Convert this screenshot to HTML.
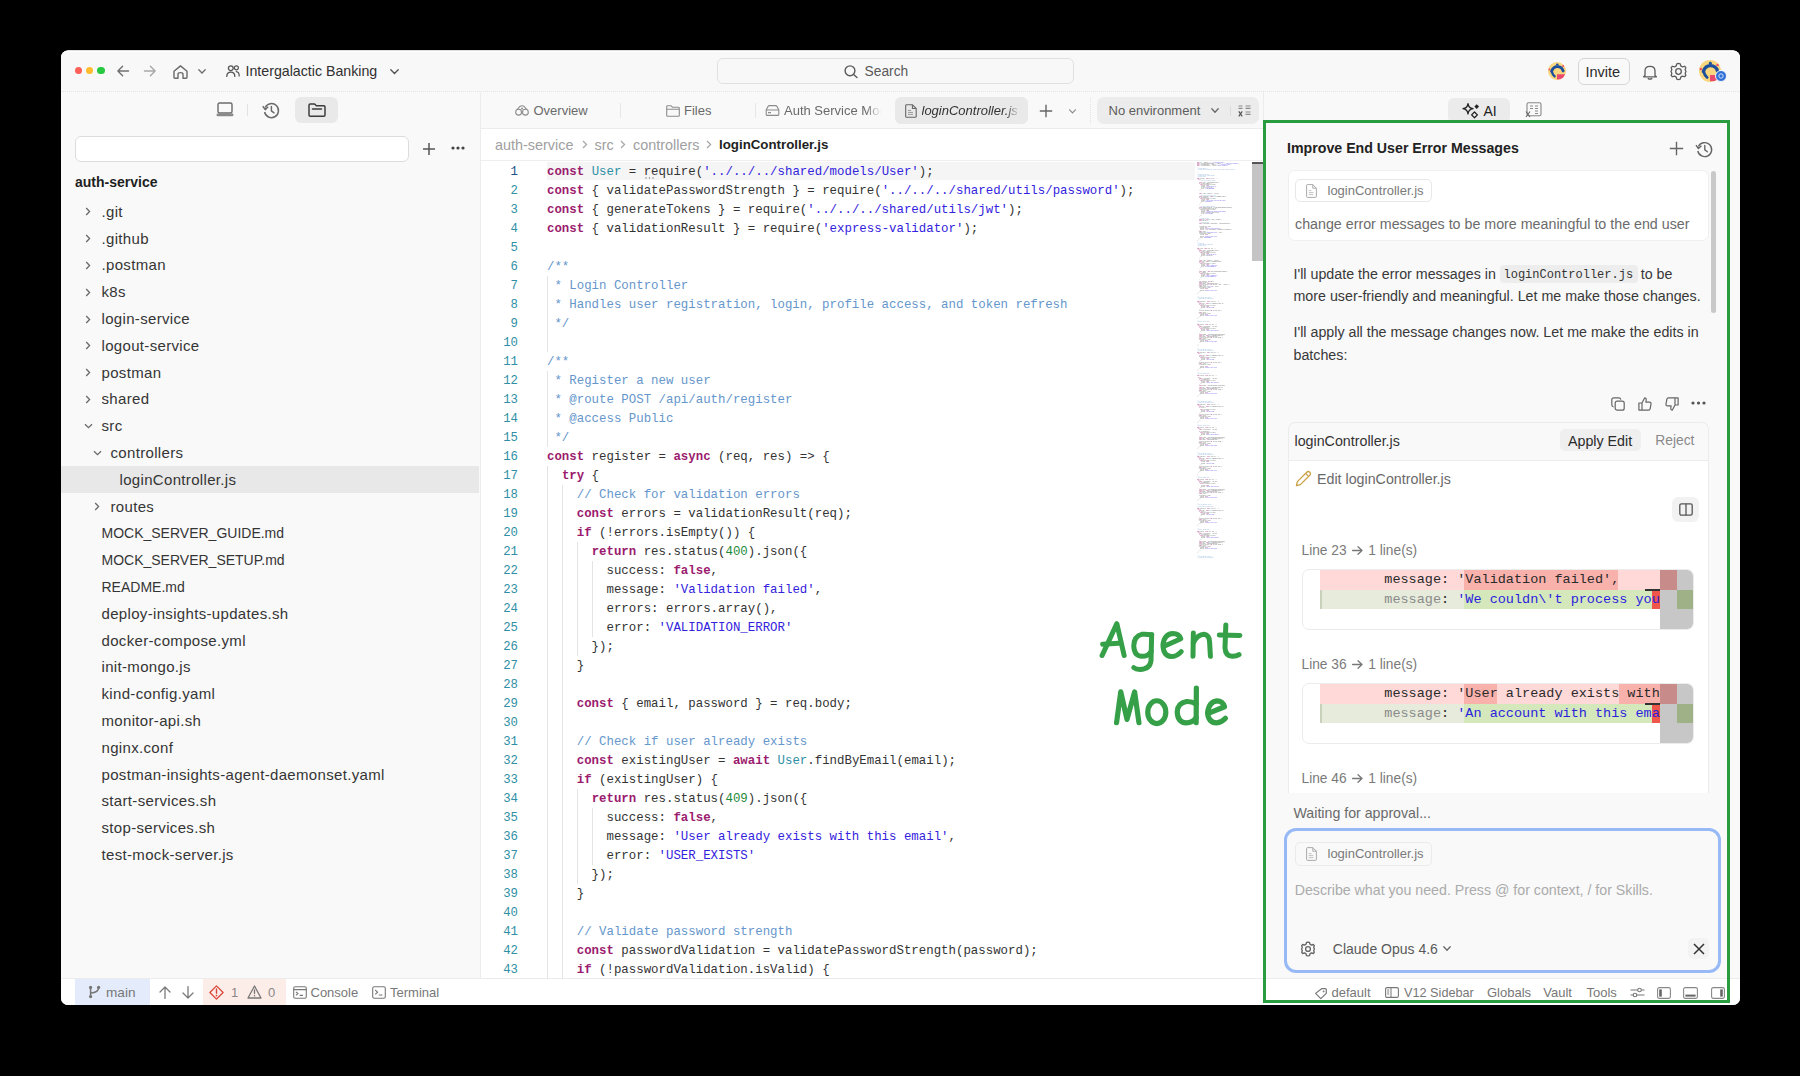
<!DOCTYPE html>
<html><head><meta charset="utf-8">
<style>
*{box-sizing:border-box;margin:0;padding:0}
html,body{width:1800px;height:1076px;background:#000;overflow:hidden}
body{font-family:"Liberation Sans",sans-serif;color:#212121;position:relative}
.app{position:absolute;left:0;top:0;width:1800px;height:1076px;background:#f9f9f9;clip-path:inset(50.5px 60px 71px 61px round 7px)}
.a{position:absolute;white-space:pre}
.hl{position:absolute;background:#e9e9e9}
.code{position:absolute;left:547px;top:162.5px;font-family:"Liberation Mono",monospace;font-size:12.4px;line-height:19px;color:#333;white-space:pre}
.ln{position:absolute;left:480px;width:38px;top:162.5px;font-family:"Liberation Mono",monospace;font-size:12.3px;line-height:19px;color:#2f8fa5;text-align:right;white-space:pre}
.k{color:#9b1b6e;font-weight:bold}
.s{color:#3322dd}
.c{color:#6596cc}
.n{color:#1f8a3b}
.t{color:#2d8ea6}
svg{position:absolute;overflow:visible}
.tab{top:100.5px;font-size:13px;line-height:20px;color:#6a6a6a;white-space:pre}
.bc{top:134.5px;font-size:14.4px;line-height:20px}
.lbl{font-size:13.75px;line-height:20px;color:#7a7a7a;margin-top:0.8px}
.mono{font-family:"Liberation Mono",monospace;font-size:13.5px;line-height:19.8px;color:#2a2a2a;white-space:pre}
.sbt{top:982.5px;font-size:13px;line-height:20px;color:#777}
.tr{font-size:15px;letter-spacing:0.33px;line-height:20px;color:#353535}
</style></head><body>
<div class="app">
  <!-- title bar -->
  <div class="a" style="left:61px;top:50px;width:1679px;height:42px;background:#f8f8f8;border-bottom:1px dotted #e4e4e4;border-top:2px solid #fff"></div>
  <!-- sidebar -->
  <div class="a" style="left:61px;top:92px;width:420px;height:886px;background:#f9f9f9;border-right:1px solid #ececec"></div>
  <!-- editor tab row -->
  <div class="a" style="left:481px;top:92px;width:782px;height:37px;background:#f9f9f9;border-bottom:1px solid #ececec"></div>
  <!-- breadcrumb & code bg -->
  <div class="a" style="left:481px;top:129px;width:782px;height:849px;background:#fff"></div>
  <div class="a" style="left:481px;top:160px;width:782px;height:1px;background:#efefef"></div>
  <!-- right panel -->
  <div class="a" style="left:1263px;top:92px;width:477px;height:886px;background:#f9f9f9;border-left:1px solid #ececec"></div>
  <!-- status bar -->
  <div class="a" style="left:61px;top:978px;width:1679px;height:27px;background:#fff;border-top:1px solid #ececec"></div>
  <!-- TITLEBAR -->
  <div class="a" style="left:75px;top:67px;width:7.4px;height:7.4px;border-radius:50%;background:#fe5f57"></div>
  <div class="a" style="left:86px;top:67px;width:7.4px;height:7.4px;border-radius:50%;background:#febc2e"></div>
  <div class="a" style="left:97.2px;top:67px;width:7.4px;height:7.4px;border-radius:50%;background:#28c840"></div>
  <svg style="left:116.5px;top:65px" width="12" height="12" viewBox="0 0 12 12"><path d="M11.5 6 H1 M5.6 1.2 L0.9 6 L5.6 10.8" fill="none" stroke="#707070" stroke-width="1.4" stroke-linecap="round" stroke-linejoin="round"/></svg>
  <svg style="left:143.5px;top:65px" width="12" height="12" viewBox="0 0 12 12"><path d="M0.5 6 H11 M6.4 1.2 L11.1 6 L6.4 10.8" fill="none" stroke="#a8a8a8" stroke-width="1.4" stroke-linecap="round" stroke-linejoin="round"/></svg>
  <svg style="left:173px;top:64.5px" width="15" height="14" viewBox="0 0 15 14"><path d="M1 6.2 L7.5 0.9 L14 6.2 V12.2 Q14 13.2 13 13.2 H10 V9 Q10 7.6 7.5 7.6 Q5 7.6 5 9 V13.2 H2 Q1 13.2 1 12.2 Z" fill="none" stroke="#6a6a6a" stroke-width="1.4" stroke-linejoin="round"/></svg>
  <svg style="left:197.5px;top:69px" width="8" height="5" viewBox="0 0 8 5"><path d="M0.8 0.8 L4 4 L7.2 0.8" fill="none" stroke="#6a6a6a" stroke-width="1.3" stroke-linecap="round"/></svg>
  <svg style="left:225.5px;top:65px" width="14" height="12" viewBox="0 0 14 12"><circle cx="4.8" cy="3.2" r="2.4" fill="none" stroke="#555" stroke-width="1.3"/><path d="M0.8 11.4 Q0.8 7.2 4.8 7.2 Q8.8 7.2 8.8 11.4" fill="none" stroke="#555" stroke-width="1.3" stroke-linecap="round"/><circle cx="10.4" cy="2.8" r="2" fill="none" stroke="#555" stroke-width="1.2"/><path d="M10.2 6.6 Q13.2 6.8 13.2 11" fill="none" stroke="#555" stroke-width="1.2" stroke-linecap="round"/></svg>
  <div class="a" style="left:245.5px;top:61px;font-size:14.2px;line-height:20px;color:#303030">Intergalactic Banking</div>
  <svg style="left:390px;top:68.5px" width="9" height="6" viewBox="0 0 9 6"><path d="M0.8 0.8 L4.5 4.5 L8.2 0.8" fill="none" stroke="#555" stroke-width="1.4" stroke-linecap="round"/></svg>
  <div class="a" style="left:717px;top:58px;width:357px;height:26px;border-radius:6px;border:1.2px solid #e0e0e0;background:#f8f8f8"></div>
  <svg style="left:843.5px;top:65px" width="14" height="13" viewBox="0 0 14 13"><circle cx="6" cy="5.8" r="4.9" fill="none" stroke="#5a5a5a" stroke-width="1.4"/><path d="M9.6 9.4 L13 12.6" stroke="#5a5a5a" stroke-width="1.4" stroke-linecap="round"/></svg>
  <div class="a" style="left:864.5px;top:62px;font-size:13.8px;line-height:20px;color:#5a5a5a">Search</div>
  <svg style="left:1548.1px;top:61.9px" width="18" height="18" viewBox="0 0 18 18"><defs><clipPath id="av1"><circle cx="9" cy="9" r="9"/></clipPath></defs><g clip-path="url(#av1)"><rect width="18" height="18" fill="#fad67e"/><path d="M3.6 9.4 Q5 4.6 9.4 4.6 Q13.8 4.6 15.2 9" fill="none" stroke="#1c4f9c" stroke-width="2.8" stroke-linecap="round"/><path d="M3.8 9.4 Q4.6 12.8 6.6 14.2" fill="none" stroke="#1c4f9c" stroke-width="2.4" stroke-linecap="round"/><circle cx="9.3" cy="2.6" r="1.2" fill="#1c4f9c"/><path d="M9 12.2 H17 L16 17.4 H9 Z" fill="#ea4a6c"/><circle cx="15.2" cy="4" r="1" fill="#ea4a6c"/><circle cx="1.4" cy="7.4" r="1" fill="#ea4a6c"/></g></svg>
  <div class="a" style="left:1577.5px;top:58px;width:52px;height:26.5px;border-radius:6px;border:1.2px solid #d6d6d6;background:#f9f9f9"></div>
  <div class="a" style="left:1585.5px;top:61.5px;font-size:14.5px;line-height:20px;color:#2b2b2b">Invite</div>
  <svg style="left:1641.5px;top:63.5px" width="16" height="16" viewBox="0 0 16 16"><path d="M3 11.6 V7 Q3 2.4 8 2.4 Q13 2.4 13 7 V11.6 L14.4 12.8 H1.6 Z" fill="none" stroke="#5c5c5c" stroke-width="1.3" stroke-linejoin="round"/><path d="M6.2 14.6 Q8 15.8 9.8 14.6" fill="none" stroke="#5c5c5c" stroke-width="1.3" stroke-linecap="round"/></svg>
  <svg style="left:1668px;top:61px" width="21" height="21" viewBox="0 0 24 24"><path d="M12 2.8 L14 3.2 L14.6 5.6 L16.6 6.8 L19 6 L20.4 7.6 L19.6 10 L20.6 12 L19.6 14 L20.4 16.4 L19 18 L16.6 17.2 L14.6 18.4 L14 20.8 L12 21.2 L10 20.8 L9.4 18.4 L7.4 17.2 L5 18 L3.6 16.4 L4.4 14 L3.4 12 L4.4 10 L3.6 7.6 L5 6 L7.4 6.8 L9.4 5.6 L10 3.2 Z" fill="none" stroke="#5c5c5c" stroke-width="1.5" stroke-linejoin="round"/><circle cx="12" cy="12" r="3.2" fill="none" stroke="#5c5c5c" stroke-width="1.5"/></svg>
  <svg style="left:1699px;top:59.5px" width="22" height="22" viewBox="0 0 18 18"><defs><clipPath id="av2"><circle cx="9" cy="9" r="9"/></clipPath></defs><g clip-path="url(#av2)"><rect width="18" height="18" fill="#fad67e"/><path d="M3.6 9.4 Q5 4.6 9.4 4.6 Q13.8 4.6 15.2 9" fill="none" stroke="#1c4f9c" stroke-width="2.8" stroke-linecap="round"/><path d="M3.8 9.4 Q4.6 12.8 6.6 14.2" fill="none" stroke="#1c4f9c" stroke-width="2.4" stroke-linecap="round"/><circle cx="9.3" cy="2.6" r="1.2" fill="#1c4f9c"/><path d="M9 12.2 H17 L16 17.4 H9 Z" fill="#ea4a6c"/><circle cx="15.2" cy="4" r="1" fill="#ea4a6c"/><circle cx="1.4" cy="7.4" r="1" fill="#ea4a6c"/></g></svg>
  <div class="a" style="left:1715px;top:70px;width:12px;height:12px;border-radius:50%;background:#2f6fd6;border:1px solid #f8f8f8"></div>
  <svg style="left:1717px;top:72px" width="8" height="8" viewBox="0 0 8 8"><circle cx="4" cy="4" r="2.2" fill="none" stroke="#cfe0fb" stroke-width="1"/></svg>
  <!-- END TITLEBAR -->
  <!-- TABROW -->
  <svg style="left:515px;top:104.5px" width="14" height="11" viewBox="0 0 14 11"><circle cx="3.6" cy="7.2" r="2.9" fill="none" stroke="#8c8c8c" stroke-width="1.1"/><circle cx="10.4" cy="7.2" r="2.9" fill="none" stroke="#8c8c8c" stroke-width="1.1"/><path d="M2 4.6 L5.2 1.2 Q7 0.2 8.8 1.2 L12 4.6" fill="none" stroke="#8c8c8c" stroke-width="1.1"/><circle cx="7" cy="3.6" r="1" fill="#8c8c8c"/></svg>
  <div class="a tab" style="left:533.5px">Overview</div>
  <div class="a" style="left:620px;top:103px;width:1px;height:15px;background:#e6e6e6"></div>
  <svg style="left:666px;top:104.5px" width="14" height="12" viewBox="0 0 14 12"><path d="M0.7 1.6 Q0.7 0.7 1.6 0.7 H5 L6.4 2.2 H12.4 Q13.3 2.2 13.3 3.1 V10.4 Q13.3 11.3 12.4 11.3 H1.6 Q0.7 11.3 0.7 10.4 Z M0.7 4.2 H13.3" fill="none" stroke="#8c8c8c" stroke-width="1.1"/></svg>
  <div class="a tab" style="left:684px">Files</div>
  <div class="a" style="left:755px;top:103px;width:1px;height:15px;background:#e6e6e6"></div>
  <svg style="left:765px;top:104.5px" width="15" height="11" viewBox="0 0 15 11"><path d="M1.2 5 L3 1.4 Q3.4 0.6 4.4 0.6 H10.6 Q11.6 0.6 12 1.4 L13.8 5 V9.4 Q13.8 10.4 12.8 10.4 H2.2 Q1.2 10.4 1.2 9.4 Z M1.2 5 H13.8" fill="none" stroke="#8c8c8c" stroke-width="1.1"/><path d="M3 7.6 H6" stroke="#8c8c8c" stroke-width="1.4"/></svg>
  <div class="a tab" style="left:784px;width:97px;overflow:hidden;-webkit-mask-image:linear-gradient(90deg,#000 85%,transparent)">Auth Service Mock</div>
  <div class="a" style="left:895px;top:97.3px;width:133px;height:26.4px;border-radius:6px;background:#e9e9e9"></div>
  <svg style="left:905px;top:103.5px" width="12" height="14" viewBox="0 0 12 14"><path d="M1.6 0.7 H7.4 L11.2 4.5 V12.4 Q11.2 13.3 10.3 13.3 H1.6 Q0.7 13.3 0.7 12.4 V1.6 Q0.7 0.7 1.6 0.7 Z M7.4 0.7 V4.5 H11.2" fill="none" stroke="#666" stroke-width="1.1"/><path d="M3 6.4 H6 M3 8.4 H8 M3 10.4 H8" stroke="#999" stroke-width="1"/></svg>
  <div class="a tab" style="left:921.5px;width:98px;overflow:hidden;font-style:italic;color:#333;-webkit-mask-image:linear-gradient(90deg,#000 85%,transparent)">loginController.js</div>
  <svg style="left:1039px;top:104px" width="14" height="14" viewBox="0 0 14 14"><path d="M7 0.8 V13.2 M0.8 7 H13.2" stroke="#666" stroke-width="1.4"/></svg>
  <svg style="left:1069px;top:108.5px" width="7" height="5" viewBox="0 0 7 5"><path d="M0.6 0.8 L3.5 3.8 L6.4 0.8" fill="none" stroke="#8c8c8c" stroke-width="1.2" stroke-linecap="round"/></svg>
  <div class="a" style="left:1090px;top:98px;width:1px;height:25px;border-left:1px dotted #e2e2e2"></div>
  <div class="a" style="left:1096.5px;top:97.3px;width:162px;height:26.4px;border-radius:7px;background:#ececec"></div>
  <div class="a tab" style="left:1108.5px;color:#5c5c5c">No environment</div>
  <svg style="left:1210.5px;top:107.5px" width="8" height="6" viewBox="0 0 8 6"><path d="M0.8 0.8 L4 4.2 L7.2 0.8" fill="none" stroke="#666" stroke-width="1.3" stroke-linecap="round"/></svg>
  <div class="a" style="left:1230px;top:105.5px;width:1px;height:10px;background:#dcdcdc"></div>
  <svg style="left:1238px;top:104.5px" width="13" height="12" viewBox="0 0 13 12"><path d="M0.5 1 H4.5 M0.5 3.4 H4.5 M7.5 1 H12.5 M7.5 3.4 H12.5 M7.5 7 H12.5 M7.5 9.4 H12.5" stroke="#8c8c8c" stroke-width="1.2"/><path d="M0.8 6.4 L4.2 11.4 M4.2 6.4 L0.8 11.4" stroke="#555" stroke-width="1.2"/></svg>
  <!-- breadcrumb -->
  <div class="a bc" style="left:495px;color:#a0a0a0">auth-service</div>
  <svg style="left:581.5px;top:139.5px" width="6" height="9" viewBox="0 0 6 9"><path d="M1 1 L4.6 4.5 L1 8" fill="none" stroke="#a6a6a6" stroke-width="1.2"/></svg>
  <div class="a bc" style="left:594.5px;color:#a0a0a0">src</div>
  <svg style="left:620px;top:139.5px" width="6" height="9" viewBox="0 0 6 9"><path d="M1 1 L4.6 4.5 L1 8" fill="none" stroke="#a6a6a6" stroke-width="1.2"/></svg>
  <div class="a bc" style="left:633px;color:#a0a0a0">controllers</div>
  <svg style="left:706px;top:139.5px" width="6" height="9" viewBox="0 0 6 9"><path d="M1 1 L4.6 4.5 L1 8" fill="none" stroke="#a6a6a6" stroke-width="1.2"/></svg>
  <div class="a bc" style="left:719px;font-weight:bold;font-size:13.3px;color:#222">loginController.js</div>
  <!-- right panel header -->
  <div class="a" style="left:1448px;top:97.5px;width:62px;height:25px;border-radius:6px;background:#ebebeb"></div>
  <svg style="left:1462.5px;top:102.5px" width="16" height="16" viewBox="0 0 16 16"><path d="M5 0.6 Q5.6 5.1 10 5.7 Q5.6 6.3 5 10.8 Q4.4 6.3 0 5.7 Q4.4 5.1 5 0.6 Z" fill="none" stroke="#222" stroke-width="1.3" stroke-linejoin="round"/><path d="M13.7 1.2 L16 3.6 L13.7 6 L11.4 3.6 Z" fill="#222"/><path d="M11.5 9 L14.4 11.9 L11.5 14.8 L8.6 11.9 Z" fill="none" stroke="#222" stroke-width="1.3" stroke-linejoin="round"/></svg>
  <div class="a" style="left:1483.5px;top:100.5px;font-size:14px;line-height:20px;color:#222">AI</div>
  <svg style="left:1525px;top:102px" width="17" height="16" viewBox="0 0 17 16"><rect x="2" y="0.8" width="14" height="13" rx="1.5" fill="none" stroke="#888" stroke-width="1.1"/><path d="M5 4 H8 M5 6.5 H8 M10 4 H13 M10 6.5 H13 M10 9 H13 M10 11.5 H13" stroke="#888" stroke-width="1"/><path d="M1 9.5 L5 15 M5 9.5 L1 15" stroke="#666" stroke-width="1.1"/></svg>
  <!-- END TABROW -->
  <!-- RIGHTPANEL -->
  <div class="a" style="left:1287px;top:137px;font-size:14.2px;font-weight:bold;line-height:22px;color:#222">Improve End User Error Messages</div>
  <svg style="left:1669px;top:141px" width="15" height="15" viewBox="0 0 15 15"><path d="M7.5 0.8 V14.2 M0.8 7.5 H14.2" stroke="#666" stroke-width="1.4"/></svg>
  <svg style="left:1695px;top:140.5px" width="18" height="17" viewBox="0 0 18 17"><path d="M3.4 5.5 A7 7 0 1 1 2.8 10" fill="none" stroke="#666" stroke-width="1.4"/><path d="M1 4.2 L3.4 7.6 L6.4 4.8" fill="none" stroke="#666" stroke-width="1.4" stroke-linejoin="round"/><path d="M9.8 4.5 V8.8 L12.4 10.8" fill="none" stroke="#666" stroke-width="1.4" stroke-linecap="round"/></svg>
  <!-- user card -->
  <div class="a" style="left:1288px;top:169.7px;width:420.5px;height:71.6px;border-radius:7px;background:#fff;border:1px solid #efefef"></div>
  <div class="a" style="left:1295px;top:179.2px;width:136.5px;height:23px;border-radius:5px;background:#fff;border:1px solid #e8e8e8"></div>
  <svg style="left:1306px;top:183.8px" width="11" height="14" viewBox="0 0 11 14"><path d="M1.4 0.6 H6.8 L10.4 4.2 V12.4 Q10.4 13.4 9.4 13.4 H1.4 Q0.6 13.4 0.6 12.4 V1.6 Q0.6 0.6 1.4 0.6 Z M6.8 0.6 V4.2 H10.4" fill="none" stroke="#aaa" stroke-width="1"/><path d="M2.8 6.6 H5.4 M2.8 8.6 H7.4 M2.8 10.6 H7.4" stroke="#bbb" stroke-width="0.9"/></svg>
  <div class="a" style="left:1327.5px;top:180.5px;font-size:13px;line-height:20px;color:#7a7a7a">loginController.js</div>
  <div class="a" style="left:1295px;top:212.5px;font-size:14.25px;line-height:22px;color:#6b6b6b">change error messages to be more meaningful to the end user</div>
  <div class="a" style="left:1710.5px;top:171px;width:5px;height:142px;border-radius:3px;background:#c9c9c9"></div>
  <!-- assistant text -->
  <div class="a" style="left:1293.5px;top:262.5px;font-size:14.25px;line-height:22.8px;color:#383838">I'll update the error messages in <span style="display:inline-block;width:137px"></span> to be
more user-friendly and meaningful. Let me make those changes.</div>
  <div class="a" style="left:1500.3px;top:264.5px;width:137.4px;height:18px;border-radius:4px;background:#ededed"></div>
  <div class="a" style="left:1503.5px;top:265.5px;font-family:'Liberation Mono',monospace;font-size:12px;line-height:18px;color:#333">loginController.js</div>
  <div class="a" style="left:1293.5px;top:321px;font-size:14.25px;line-height:22.5px;color:#383838">I'll apply all the message changes now. Let me make the edits in
batches:</div>
  <!-- action icons -->
  <svg style="left:1610.5px;top:396.5px" width="14" height="14" viewBox="0 0 14 14"><rect x="4.2" y="4.2" width="9" height="9" rx="2" fill="none" stroke="#666" stroke-width="1.2"/><path d="M9.8 2.6 Q9.6 0.8 7.8 0.8 H2.8 Q0.8 0.8 0.8 2.8 V7.8 Q0.8 9.6 2.6 9.8" fill="none" stroke="#666" stroke-width="1.2"/></svg>
  <svg style="left:1637.5px;top:396.5px" width="14" height="14" viewBox="0 0 14 14"><path d="M4 6 L6.6 0.9 Q8.4 1 8.2 3 L7.9 5.2 H11.6 Q13.2 5.2 13 6.8 L12.2 11.6 Q11.9 13.1 10.5 13.1 H4 Z M0.9 6 H4 V13.1 H0.9 Z" fill="none" stroke="#666" stroke-width="1.2" stroke-linejoin="round"/></svg>
  <svg style="left:1664.5px;top:396.5px" width="14" height="14" viewBox="0 0 14 14"><path d="M10 8 L7.4 13.1 Q5.6 13 5.8 11 L6.1 8.8 H2.4 Q0.8 8.8 1 7.2 L1.8 2.4 Q2.1 0.9 3.5 0.9 H10 Z M13.1 8 H10 V0.9 H13.1 Z" fill="none" stroke="#666" stroke-width="1.2" stroke-linejoin="round"/></svg>
  <svg style="left:1690.5px;top:401px" width="15" height="4" viewBox="0 0 15 4"><circle cx="2" cy="2" r="1.6" fill="#555"/><circle cx="7.5" cy="2" r="1.6" fill="#555"/><circle cx="13" cy="2" r="1.6" fill="#555"/></svg>
  <!-- edit card -->
  <div class="a" style="left:1288px;top:422px;width:420.5px;height:371px;border-radius:7px 7px 0 0;background:#f9f9f9;border:1px solid #ececec;border-bottom:none"></div>
  <div class="a" style="left:1289px;top:459.5px;width:418.5px;height:1px;background:#ececec"></div>
  <div class="a" style="left:1289px;top:460.5px;width:418.5px;height:332px;background:#fff"></div>
  <div class="a" style="left:1294.5px;top:429.5px;font-size:14.25px;line-height:22px;color:#333">loginController.js</div>
  <div class="a" style="left:1559.7px;top:429px;width:81px;height:22.3px;border-radius:5px;background:#efefef"></div>
  <div class="a" style="left:1568px;top:429.5px;font-size:14.25px;line-height:22px;color:#2a2a2a">Apply Edit</div>
  <div class="a" style="left:1655.3px;top:429.5px;font-size:13.8px;line-height:22px;color:#8a8a8a">Reject</div>
  <svg style="left:1295px;top:470px" width="17" height="17" viewBox="0 0 17 17"><path d="M1.4 15.6 L2.4 11.6 L12 2 Q13.4 0.8 14.8 2.2 Q16.2 3.6 15 5 L5.4 14.6 Z M10.6 3.4 L13.6 6.4" fill="none" stroke="#c9a046" stroke-width="1.3" stroke-linejoin="round"/></svg>
  <div class="a" style="left:1317px;top:467.5px;font-size:14.25px;line-height:22px;color:#6a6a6a">Edit loginController.js</div>
  <div class="a" style="left:1672.4px;top:497px;width:26.6px;height:25px;border-radius:6px;background:#f2f2f2"></div>
  <svg style="left:1679px;top:503px" width="14" height="13" viewBox="0 0 14 13"><rect x="0.8" y="0.8" width="12.4" height="11.4" rx="1.6" fill="none" stroke="#555" stroke-width="1.3"/><path d="M7 0.8 V12.2" stroke="#555" stroke-width="1.3"/></svg>
  <div class="a lbl" style="left:1301.5px;top:540.2px">Line 23 <span style="display:inline-block;width:11px;height:9px;position:relative;vertical-align:0px;margin:0 1.5px"><svg style="left:0;top:0" width="11" height="9" viewBox="0 0 11 9"><path d="M0.6 4.5 H10 M6 0.8 L10 4.5 L6 8.2" fill="none" stroke="#777" stroke-width="1.3" stroke-linecap="round" stroke-linejoin="round"/></svg></span> 1 line(s)</div>
  <div class="a" style="left:1302px;top:568.6px;width:391.5px;height:61.2px;border-radius:7px;background:#fff;border:1px solid #ececec;overflow:hidden">
    <div class="a" style="left:16.5px;top:0.4px;width:340.5px;height:19.8px;background:#ffd8d8"></div>
    <div class="a" style="left:161.2px;top:0.4px;width:153.7px;height:19.8px;background:#f9b1ac"></div>
    <div class="a" style="left:16.5px;top:20.2px;width:340.5px;height:19.6px;background:#e6ebdb;border-left:2px solid #c9d1bc"></div>
    <div class="a" style="left:161.2px;top:20.2px;width:195.8px;height:19.6px;background:#d5e8bc"></div>
    <div class="a" style="left:349px;top:20.2px;width:8px;height:19.6px;background:#f0574a"></div>
    <div class="a" style="left:342px;top:19.6px;width:15px;height:2px;background:#333"></div>
    <div class="a" style="left:357px;top:-1px;width:36px;height:63px;background:#c7c7c7"></div>
    <div class="a" style="left:357px;top:0.4px;width:17px;height:19.8px;background:#c78b8a"></div>
    <div class="a" style="left:374px;top:20.2px;width:18px;height:19.6px;background:#9fb186"></div>
    <div class="a mono" style="left:16.5px;top:0.4px;width:340.5px;overflow:hidden">        message: 'Validation failed',</div>
    <div class="a mono" style="left:16.5px;top:20.2px;width:340.5px;overflow:hidden">        <span style='color:#8a8a8a'>message</span>: <span style='color:#2b1fdc'>'We couldn\'t process you</span></div>
  </div>
  <div class="a lbl" style="left:1301.5px;top:654px">Line 36 <span style="display:inline-block;width:11px;height:9px;position:relative;vertical-align:0px;margin:0 1.5px"><svg style="left:0;top:0" width="11" height="9" viewBox="0 0 11 9"><path d="M0.6 4.5 H10 M6 0.8 L10 4.5 L6 8.2" fill="none" stroke="#777" stroke-width="1.3" stroke-linecap="round" stroke-linejoin="round"/></svg></span> 1 line(s)</div>
  <div class="a" style="left:1302px;top:682.5px;width:391.5px;height:61.2px;border-radius:7px;background:#fff;border:1px solid #ececec;overflow:hidden">
    <div class="a" style="left:16.5px;top:0.4px;width:340.5px;height:19.8px;background:#ffd8d8"></div>
    <div class="a" style="left:161.2px;top:0.4px;width:33px;height:19.8px;background:#f9b1ac"></div>
    <div class="a" style="left:316px;top:0.4px;width:41px;height:19.8px;background:#f9b1ac"></div>
    <div class="a" style="left:16.5px;top:20.2px;width:340.5px;height:19.6px;background:#e6ebdb;border-left:2px solid #c9d1bc"></div>
    <div class="a" style="left:161.2px;top:20.2px;width:195.8px;height:19.6px;background:#d5e8bc"></div>
    <div class="a" style="left:349px;top:20.2px;width:8px;height:19.6px;background:#f0574a"></div>
    <div class="a" style="left:342px;top:19.6px;width:15px;height:2px;background:#333"></div>
    <div class="a" style="left:357px;top:-1px;width:36px;height:63px;background:#c7c7c7"></div>
    <div class="a" style="left:357px;top:0.4px;width:17px;height:19.8px;background:#c78b8a"></div>
    <div class="a" style="left:374px;top:20.2px;width:18px;height:19.6px;background:#9fb186"></div>
    <div class="a mono" style="left:16.5px;top:0.4px;width:340.5px;overflow:hidden">        message: 'User already exists with</div>
    <div class="a mono" style="left:16.5px;top:20.2px;width:340.5px;overflow:hidden">        <span style='color:#8a8a8a'>message</span>: <span style='color:#2b1fdc'>'An account with this ema</span></div>
  </div>
  <div class="a lbl" style="left:1301.5px;top:767.8px">Line 46 <span style="display:inline-block;width:11px;height:9px;position:relative;vertical-align:0px;margin:0 1.5px"><svg style="left:0;top:0" width="11" height="9" viewBox="0 0 11 9"><path d="M0.6 4.5 H10 M6 0.8 L10 4.5 L6 8.2" fill="none" stroke="#777" stroke-width="1.3" stroke-linecap="round" stroke-linejoin="round"/></svg></span> 1 line(s)</div>
  <div class="a" style="left:1289px;top:792.5px;width:418.5px;height:1px;background:#ececec"></div>
  <div class="a" style="left:1263px;top:793px;width:477px;height:185px;background:#f9f9f9"></div>
  <div class="a" style="left:1293.5px;top:803px;font-size:14.2px;line-height:20px;color:#6a6a6a">Waiting for approval...</div>
  <!-- input -->
  <div class="a" style="left:1283.5px;top:828px;width:437.5px;height:145px;border-radius:12px;background:#f9f9f9;border:3px solid #97baf7"></div>
  <div class="a" style="left:1295px;top:841.7px;width:136.5px;height:24px;border-radius:5px;background:#f9f9f9;border:1px solid #ebebeb"></div>
  <svg style="left:1306px;top:846.5px" width="11" height="14" viewBox="0 0 11 14"><path d="M1.4 0.6 H6.8 L10.4 4.2 V12.4 Q10.4 13.4 9.4 13.4 H1.4 Q0.6 13.4 0.6 12.4 V1.6 Q0.6 0.6 1.4 0.6 Z M6.8 0.6 V4.2 H10.4" fill="none" stroke="#aaa" stroke-width="1"/><path d="M2.8 6.6 H5.4 M2.8 8.6 H7.4 M2.8 10.6 H7.4" stroke="#bbb" stroke-width="0.9"/></svg>
  <div class="a" style="left:1327.5px;top:843.5px;font-size:13px;line-height:20px;color:#7a7a7a">loginController.js</div>
  <div class="a" style="left:1294.7px;top:879.5px;font-size:14.2px;line-height:20px;color:#ababab">Describe what you need. Press @ for context, / for Skills.</div>
  <svg style="left:1299px;top:939.5px" width="18" height="18" viewBox="0 0 24 24"><path d="M12 2.8 L14 3.2 L14.6 5.6 L16.6 6.8 L19 6 L20.4 7.6 L19.6 10 L20.6 12 L19.6 14 L20.4 16.4 L19 18 L16.6 17.2 L14.6 18.4 L14 20.8 L12 21.2 L10 20.8 L9.4 18.4 L7.4 17.2 L5 18 L3.6 16.4 L4.4 14 L3.4 12 L4.4 10 L3.6 7.6 L5 6 L7.4 6.8 L9.4 5.6 L10 3.2 Z" fill="none" stroke="#666" stroke-width="1.8" stroke-linejoin="round"/><circle cx="12" cy="12" r="3.2" fill="none" stroke="#666" stroke-width="1.8"/></svg>
  <div class="a" style="left:1332.8px;top:938.5px;font-size:14px;line-height:20px;color:#595959">Claude Opus 4.6</div>
  <svg style="left:1443px;top:945.5px" width="8" height="6" viewBox="0 0 8 6"><path d="M0.8 0.8 L4 4.2 L7.2 0.8" fill="none" stroke="#666" stroke-width="1.3" stroke-linecap="round"/></svg>
  <div class="a" style="left:1688px;top:938px;width:21px;height:21px;border-radius:5px;background:#f3f3f3"></div>
  <svg style="left:1692.5px;top:942.5px" width="12" height="12" viewBox="0 0 12 12"><path d="M1 1 L11 11 M11 1 L1 11" stroke="#333" stroke-width="1.5"/></svg>
  <!-- END RIGHTPANEL -->
  <!-- SIDEBAR -->
  <svg style="left:216px;top:102px" width="18" height="15" viewBox="0 0 18 15"><rect x="2" y="1" width="14" height="10" rx="1.5" fill="none" stroke="#6b6b6b" stroke-width="1.4"/><rect x="0.5" y="11.6" width="17" height="2.6" rx="1.3" fill="#8a8a8a"/></svg>
  <div class="a" style="left:247px;top:104px;width:1px;height:12px;background:#e2e2e2"></div>
  <svg style="left:262px;top:102px" width="18" height="17" viewBox="0 0 18 17"><path d="M3.2 5.5 A7 7 0 1 1 2.6 10" fill="none" stroke="#6b6b6b" stroke-width="1.5"/><path d="M0.8 4.2 L3.2 7.6 L6.2 4.8" fill="none" stroke="#6b6b6b" stroke-width="1.5" stroke-linejoin="round"/><path d="M9.4 4.5 V8.8 L12 10.8" fill="none" stroke="#6b6b6b" stroke-width="1.5" stroke-linecap="round"/></svg>
  <div class="a" style="left:295px;top:97px;width:43px;height:26px;border-radius:6px;background:#e9e9e9"></div>
  <svg style="left:308px;top:103px" width="18" height="14" viewBox="0 0 18 14"><path d="M1 2.2 Q1 1 2.2 1 H6.6 L8.4 2.8 H15.8 Q17 2.8 17 4 V12 Q17 13.2 15.8 13.2 H2.2 Q1 13.2 1 12 Z" fill="none" stroke="#3c3c3c" stroke-width="1.5" stroke-linejoin="round"/><path d="M4.5 6 H13.5" stroke="#3c3c3c" stroke-width="1.5" stroke-linecap="round"/></svg>
  <div class="a" style="left:75px;top:135.5px;width:334px;height:26px;border-radius:6px;background:#fff;border:1.5px solid #dcdcdc"></div>
  <svg style="left:422px;top:141.5px" width="14" height="14" viewBox="0 0 14 14"><path d="M7 1 V13 M1 7 H13" stroke="#555" stroke-width="1.5"/></svg>
  <svg style="left:451px;top:146px" width="14" height="4" viewBox="0 0 14 4"><circle cx="2" cy="2" r="1.6" fill="#444"/><circle cx="7" cy="2" r="1.6" fill="#444"/><circle cx="12" cy="2" r="1.6" fill="#444"/></svg>
  <div class="a" style="left:75px;top:172px;font-size:14px;font-weight:bold;color:#1f1f1f;line-height:20px">auth-service</div>
  <div class="a" style="left:61px;top:466px;width:418px;height:26.5px;background:#e8e8e8"></div>
  <div class="a tr" style="left:101.5px;top:201.8px">.git</div>
  <svg style="left:85px;top:207.3px" width="6" height="9" viewBox="0 0 6 9"><path d="M1.2 1 L4.6 4.5 L1.2 8" fill="none" stroke="#6a6a6a" stroke-width="1.3"/></svg>
  <div class="a tr" style="left:101.5px;top:228.6px">.github</div>
  <svg style="left:85px;top:234.1px" width="6" height="9" viewBox="0 0 6 9"><path d="M1.2 1 L4.6 4.5 L1.2 8" fill="none" stroke="#6a6a6a" stroke-width="1.3"/></svg>
  <div class="a tr" style="left:101.5px;top:255.4px">.postman</div>
  <svg style="left:85px;top:260.9px" width="6" height="9" viewBox="0 0 6 9"><path d="M1.2 1 L4.6 4.5 L1.2 8" fill="none" stroke="#6a6a6a" stroke-width="1.3"/></svg>
  <div class="a tr" style="left:101.5px;top:282.2px">k8s</div>
  <svg style="left:85px;top:287.7px" width="6" height="9" viewBox="0 0 6 9"><path d="M1.2 1 L4.6 4.5 L1.2 8" fill="none" stroke="#6a6a6a" stroke-width="1.3"/></svg>
  <div class="a tr" style="left:101.5px;top:309.0px">login-service</div>
  <svg style="left:85px;top:314.5px" width="6" height="9" viewBox="0 0 6 9"><path d="M1.2 1 L4.6 4.5 L1.2 8" fill="none" stroke="#6a6a6a" stroke-width="1.3"/></svg>
  <div class="a tr" style="left:101.5px;top:335.8px">logout-service</div>
  <svg style="left:85px;top:341.3px" width="6" height="9" viewBox="0 0 6 9"><path d="M1.2 1 L4.6 4.5 L1.2 8" fill="none" stroke="#6a6a6a" stroke-width="1.3"/></svg>
  <div class="a tr" style="left:101.5px;top:362.6px">postman</div>
  <svg style="left:85px;top:368.1px" width="6" height="9" viewBox="0 0 6 9"><path d="M1.2 1 L4.6 4.5 L1.2 8" fill="none" stroke="#6a6a6a" stroke-width="1.3"/></svg>
  <div class="a tr" style="left:101.5px;top:389.4px">shared</div>
  <svg style="left:85px;top:394.9px" width="6" height="9" viewBox="0 0 6 9"><path d="M1.2 1 L4.6 4.5 L1.2 8" fill="none" stroke="#6a6a6a" stroke-width="1.3"/></svg>
  <div class="a tr" style="left:101.5px;top:416.2px">src</div>
  <svg style="left:83.5px;top:423.2px" width="9" height="6" viewBox="0 0 9 6"><path d="M1 1.2 L4.5 4.6 L8 1.2" fill="none" stroke="#6a6a6a" stroke-width="1.3"/></svg>
  <div class="a tr" style="left:110.5px;top:443.0px">controllers</div>
  <svg style="left:92.5px;top:450.0px" width="9" height="6" viewBox="0 0 9 6"><path d="M1 1.2 L4.5 4.6 L8 1.2" fill="none" stroke="#6a6a6a" stroke-width="1.3"/></svg>
  <div class="a tr" style="left:119.5px;top:469.8px">loginController.js</div>
  <div class="a tr" style="left:110.5px;top:496.6px">routes</div>
  <svg style="left:94px;top:502.1px" width="6" height="9" viewBox="0 0 6 9"><path d="M1.2 1 L4.6 4.5 L1.2 8" fill="none" stroke="#6a6a6a" stroke-width="1.3"/></svg>
  <div class="a tr" style="left:101.5px;top:523.4px;font-size:14px;letter-spacing:0">MOCK_SERVER_GUIDE.md</div>
  <div class="a tr" style="left:101.5px;top:550.2px;font-size:14px;letter-spacing:0">MOCK_SERVER_SETUP.md</div>
  <div class="a tr" style="left:101.5px;top:577.0px;font-size:14px;letter-spacing:0">README.md</div>
  <div class="a tr" style="left:101.5px;top:603.8px">deploy-insights-updates.sh</div>
  <div class="a tr" style="left:101.5px;top:630.6px">docker-compose.yml</div>
  <div class="a tr" style="left:101.5px;top:657.4px">init-mongo.js</div>
  <div class="a tr" style="left:101.5px;top:684.2px">kind-config.yaml</div>
  <div class="a tr" style="left:101.5px;top:711.0px">monitor-api.sh</div>
  <div class="a tr" style="left:101.5px;top:737.8px">nginx.conf</div>
  <div class="a tr" style="left:101.5px;top:764.6px">postman-insights-agent-daemonset.yaml</div>
  <div class="a tr" style="left:101.5px;top:791.4px">start-services.sh</div>
  <div class="a tr" style="left:101.5px;top:818.2px">stop-services.sh</div>
  <div class="a tr" style="left:101.5px;top:845.0px">test-mock-server.js</div>
  <!-- END SIDEBAR -->
  <!-- code -->
  <div class="a" style="left:547px;top:161.5px;width:648px;height:18.5px;background:#f5f5f5"></div>
  <div class="a" style="left:547px;top:275.5px;width:1px;height:76px;background:#e4e4e4"></div>
  <div class="a" style="left:547px;top:370.5px;width:1px;height:76px;background:#e4e4e4"></div>
  <div class="a" style="left:547px;top:465.5px;width:1px;height:513px;background:#e4e4e4"></div>
  <div class="a" style="left:562px;top:484.5px;width:1px;height:494px;background:#e4e4e4"></div>
  <div class="a" style="left:577px;top:541.5px;width:1px;height:114px;background:#e4e4e4"></div>
  <div class="a" style="left:592px;top:560.5px;width:1px;height:76px;background:#e4e4e4"></div>
  <div class="a" style="left:577px;top:788.5px;width:1px;height:95px;background:#e4e4e4"></div>
  <div class="a" style="left:592px;top:807.5px;width:1px;height:57px;background:#e4e4e4"></div>
  <div class="ln"><span style="color:#24508a">1</span>
2
3
4
5
6
7
8
9
10
11
12
13
14
15
16
17
18
19
20
21
22
23
24
25
26
27
28
29
30
31
32
33
34
35
36
37
38
39
40
41
42
43</div>
<div class="code"><span class="k">const</span> <span class="t">User</span> = require(<span class="s">'../../../shared/models/User'</span>);
<span class="k">const</span> { validatePasswordStrength } = require(<span class="s">'../../../shared/utils/password'</span>);
<span class="k">const</span> { generateTokens } = require(<span class="s">'../../../shared/utils/jwt'</span>);
<span class="k">const</span> { validationResult } = require(<span class="s">'express-validator'</span>);

<span class="c">/**</span>
<span class="c"> * Login Controller</span>
<span class="c"> * Handles user registration, login, profile access, and token refresh</span>
<span class="c"> */</span>

<span class="c">/**</span>
<span class="c"> * Register a new user</span>
<span class="c"> * @route POST /api/auth/register</span>
<span class="c"> * @access Public</span>
<span class="c"> */</span>
<span class="k">const</span> register = <span class="k">async</span> (req, res) =&gt; {
  <span class="k">try</span> {
    <span class="c">// Check for validation errors</span>
    <span class="k">const</span> errors = validationResult(req);
    <span class="k">if</span> (!errors.isEmpty()) {
      <span class="k">return</span> res.status(<span class="n">400</span>).json({
        success: <span class="k">false</span>,
        message: <span class="s">'Validation failed'</span>,
        errors: errors.array(),
        error: <span class="s">'VALIDATION_ERROR'</span>
      });
    }

    <span class="k">const</span> { email, password } = req.body;

    <span class="c">// Check if user already exists</span>
    <span class="k">const</span> existingUser = <span class="k">await</span> <span class="t">User</span>.findByEmail(email);
    <span class="k">if</span> (existingUser) {
      <span class="k">return</span> res.status(<span class="n">409</span>).json({
        success: <span class="k">false</span>,
        message: <span class="s">'User already exists with this email'</span>,
        error: <span class="s">'USER_EXISTS'</span>
      });
    }

    <span class="c">// Validate password strength</span>
    <span class="k">const</span> passwordValidation = validatePasswordStrength(password);
    <span class="k">if</span> (!passwordValidation.isValid) {</div>

  <svg style="left:644.5px;top:177px" width="10" height="2" viewBox="0 0 10 2"><circle cx="1" cy="1" r="0.7" fill="#777"/><circle cx="4.5" cy="1" r="0.7" fill="#777"/><circle cx="8" cy="1" r="0.7" fill="#777"/></svg>
  <!-- END CODE -->
  <!-- MINIMAP -->
  <div class="code" style="left:1197px;top:161.5px;transform:scale(0.072,0.058);transform-origin:0 0;opacity:0.85"><span class="k">const</span> <span class="t">User</span> = require(<span class="s">'../../../shared/models/User'</span>);
<span class="k">const</span> { validatePasswordStrength } = require(<span class="s">'../../../shared/utils/password'</span>);
<span class="k">const</span> { generateTokens } = require(<span class="s">'../../../shared/utils/jwt'</span>);
<span class="k">const</span> { validationResult } = require(<span class="s">'express-validator'</span>);

<span class="c">/**</span>
<span class="c"> * Login Controller</span>
<span class="c"> * Handles user registration, login, profile access, and token refresh</span>
<span class="c"> */</span>

<span class="c">/**</span>
<span class="c"> * Register a new user</span>
<span class="c"> * @route POST /api/auth/register</span>
<span class="c"> * @access Public</span>
<span class="c"> */</span>
<span class="k">const</span> register = <span class="k">async</span> (req, res) =&gt; {
  <span class="k">try</span> {
    <span class="c">// Check for validation errors</span>
    <span class="k">const</span> errors = validationResult(req);
    <span class="k">if</span> (!errors.isEmpty()) {
      <span class="k">return</span> res.status(<span class="n">400</span>).json({
        success: <span class="k">false</span>,
        message: <span class="s">'Validation failed'</span>,
        errors: errors.array(),
        error: <span class="s">'VALIDATION_ERROR'</span>
      });
    }

    <span class="k">const</span> { email, password } = req.body;

    <span class="c">// Check if user already exists</span>
    <span class="k">const</span> existingUser = <span class="k">await</span> <span class="t">User</span>.findByEmail(email);
    <span class="k">if</span> (existingUser) {
      <span class="k">return</span> res.status(<span class="n">409</span>).json({
        success: <span class="k">false</span>,
        message: <span class="s">'User already exists with this email'</span>,
        error: <span class="s">'USER_EXISTS'</span>
      });
    }

    <span class="c">// Validate password strength</span>
    <span class="k">const</span> passwordValidation = validatePasswordStrength(password);
    <span class="k">if</span> (!passwordValidation.isValid) {
      return res.status(<span class="n">400</span>).json({
        success: <span class="k">false</span>,
        message: <span class="s">'Password does not meet requirements'</span>,
        errors: passwordValidation.errors,
        error: <span class="s">'WEAK_PASSWORD'</span>
      });
    }

    <span class="c">// Create new user</span>
    <span class="k">const</span> user = <span class="k">new</span> <span class="t">User</span>({ email, password });
    <span class="k">await</span> user.save();

    <span class="c">// Generate tokens</span>
    <span class="k">const</span> { accessToken, refreshToken } = generateTokens(user);

    res.status(<span class="n">201</span>).json({
      success: <span class="k">true</span>,
      message: <span class="s">'User registered successfully'</span>,
      payload: { user: user.toJSON(), accessToken, refreshToken }
    });
  } <span class="k">catch</span> (error) {
    console.error(<span class="s">'Registration error:'</span>, error);
    res.status(<span class="n">500</span>).json({
      success: <span class="k">false</span>,
      message: <span class="s">'Internal server error'</span>,
      error: <span class="s">'SERVER_ERROR'</span>
    });
  }
};

<span class="c">/**</span>
<span class="c"> * Login user</span>
<span class="c"> * @route POST /api/auth/login</span>
<span class="c"> * @access Public</span>
<span class="c"> */</span>
<span class="k">const</span> login = <span class="k">async</span> (req, res) =&gt; {
  <span class="k">try</span> {
    <span class="k">const</span> errors = validationResult(req);
    <span class="k">if</span> (!errors.isEmpty()) {
      <span class="k">return</span> res.status(<span class="n">400</span>).json({
        success: <span class="k">false</span>,
        message: <span class="s">'Validation failed'</span>,
        errors: errors.array()
      });
    }

    <span class="k">const</span> { email, password } = req.body;
    <span class="k">const</span> user = <span class="k">await</span> <span class="t">User</span>.findByEmail(email);
    <span class="k">if</span> (!user) {
      <span class="k">return</span> res.status(<span class="n">401</span>).json({
        success: <span class="k">false</span>,
        message: <span class="s">'Invalid credentials'</span>,
        error: <span class="s">'INVALID_CREDENTIALS'</span>
      });
    }

    <span class="k">const</span> isMatch = <span class="k">await</span> user.comparePassword(password);
    <span class="k">if</span> (!isMatch) {
      <span class="k">return</span> res.status(<span class="n">401</span>).json({
        success: <span class="k">false</span>,
        message: <span class="s">'Invalid credentials'</span>,
        error: <span class="s">'INVALID_CREDENTIALS'</span>
      });
    }

    user.lastLogin = <span class="k">new</span> Date();
    <span class="k">await</span> user.save();
    <span class="k">const</span> tokens = generateTokens(user);
    res.json({ success: <span class="k">true</span>, payload: { user, ...tokens } });
  } <span class="k">catch</span> (error) {
    console.error(<span class="s">'Login error:'</span>, error);
    res.status(<span class="n">500</span>).json({
      success: <span class="k">false</span>,
      message: <span class="s">'Internal server error'</span>
    });
  }
};


<span class="c">/**</span>
<span class="c"> * Get current user profile</span>
<span class="c"> * @route GET /api/auth/profile</span>
<span class="c"> */</span>
<span class="k">const</span> getProfile = <span class="k">async</span> (req, res) =&gt; {
  <span class="k">try</span> {
    <span class="k">const</span> user = <span class="k">await</span> <span class="t">User</span>.findById(req.user.id);
    <span class="k">if</span> (!user) {
      <span class="k">return</span> res.status(<span class="n">404</span>).json({
        success: <span class="k">false</span>,
        message: <span class="s">'User not found'</span>
      });
    }
    res.json({ success: <span class="k">true</span>, payload: user });
  } <span class="k">catch</span> (error) {
    res.status(<span class="n">500</span>).json({
      success: <span class="k">false</span>,
      message: <span class="s">'Internal server error'</span>
    });
  }
};

<span class="c">/**</span>
<span class="c"> * Refresh access token</span>
<span class="c"> */</span>
<span class="k">const</span> refresh = <span class="k">async</span> (req, res) =&gt; {
  <span class="k">try</span> {
    <span class="k">const</span> { refreshToken } = req.body;
    <span class="k">if</span> (!refreshToken) {
      <span class="k">return</span> res.status(<span class="n">400</span>).json({
        success: <span class="k">false</span>,
        message: <span class="s">'Refresh token required'</span>
      });
    }
    <span class="k">const</span> decoded = verifyRefreshToken(refreshToken);
    <span class="k">const</span> user = <span class="k">await</span> <span class="t">User</span>.findById(decoded.id);
    <span class="k">const</span> tokens = generateTokens(user);
    res.json({ success: <span class="k">true</span>, payload: tokens });
  } <span class="k">catch</span> (error) {
    res.status(<span class="n">401</span>).json({
      success: <span class="k">false</span>,
      message: <span class="s">'Invalid refresh token'</span>
    });
  }
};


<span class="c">/**</span>
<span class="c"> * Get current user profile</span>
<span class="c"> * @route GET /api/auth/profile</span>
<span class="c"> */</span>
<span class="k">const</span> getProfile = <span class="k">async</span> (req, res) =&gt; {
  <span class="k">try</span> {
    <span class="k">const</span> user = <span class="k">await</span> <span class="t">User</span>.findById(req.user.id);
    <span class="k">if</span> (!user) {
      <span class="k">return</span> res.status(<span class="n">404</span>).json({
        success: <span class="k">false</span>,
        message: <span class="s">'User not found'</span>
      });
    }
    res.json({ success: <span class="k">true</span>, payload: user });
  } <span class="k">catch</span> (error) {
    res.status(<span class="n">500</span>).json({
      success: <span class="k">false</span>,
      message: <span class="s">'Internal server error'</span>
    });
  }
};

<span class="c">/**</span>
<span class="c"> * Refresh access token</span>
<span class="c"> */</span>
<span class="k">const</span> refresh = <span class="k">async</span> (req, res) =&gt; {
  <span class="k">try</span> {
    <span class="k">const</span> { refreshToken } = req.body;
    <span class="k">if</span> (!refreshToken) {
      <span class="k">return</span> res.status(<span class="n">400</span>).json({
        success: <span class="k">false</span>,
        message: <span class="s">'Refresh token required'</span>
      });
    }
    <span class="k">const</span> decoded = verifyRefreshToken(refreshToken);
    <span class="k">const</span> user = <span class="k">await</span> <span class="t">User</span>.findById(decoded.id);
    <span class="k">const</span> tokens = generateTokens(user);
    res.json({ success: <span class="k">true</span>, payload: tokens });
  } <span class="k">catch</span> (error) {
    res.status(<span class="n">401</span>).json({
      success: <span class="k">false</span>,
      message: <span class="s">'Invalid refresh token'</span>
    });
  }
};


<span class="c">/**</span>
<span class="c"> * Get current user profile</span>
<span class="c"> * @route GET /api/auth/profile</span>
<span class="c"> */</span>
<span class="k">const</span> getProfile = <span class="k">async</span> (req, res) =&gt; {
  <span class="k">try</span> {
    <span class="k">const</span> user = <span class="k">await</span> <span class="t">User</span>.findById(req.user.id);
    <span class="k">if</span> (!user) {
      <span class="k">return</span> res.status(<span class="n">404</span>).json({
        success: <span class="k">false</span>,
        message: <span class="s">'User not found'</span>
      });
    }
    res.json({ success: <span class="k">true</span>, payload: user });
  } <span class="k">catch</span> (error) {
    res.status(<span class="n">500</span>).json({
      success: <span class="k">false</span>,
      message: <span class="s">'Internal server error'</span>
    });
  }
};

<span class="c">/**</span>
<span class="c"> * Refresh access token</span>
<span class="c"> */</span>
<span class="k">const</span> refresh = <span class="k">async</span> (req, res) =&gt; {
  <span class="k">try</span> {
    <span class="k">const</span> { refreshToken } = req.body;
    <span class="k">if</span> (!refreshToken) {
      <span class="k">return</span> res.status(<span class="n">400</span>).json({
        success: <span class="k">false</span>,
        message: <span class="s">'Refresh token required'</span>
      });
    }
    <span class="k">const</span> decoded = verifyRefreshToken(refreshToken);
    <span class="k">const</span> user = <span class="k">await</span> <span class="t">User</span>.findById(decoded.id);
    <span class="k">const</span> tokens = generateTokens(user);
    res.json({ success: <span class="k">true</span>, payload: tokens });
  } <span class="k">catch</span> (error) {
    res.status(<span class="n">401</span>).json({
      success: <span class="k">false</span>,
      message: <span class="s">'Invalid refresh token'</span>
    });
  }
};


<span class="c">/**</span>
<span class="c"> * Get current user profile</span>
<span class="c"> * @route GET /api/auth/profile</span>
<span class="c"> */</span>
<span class="k">const</span> getProfile = <span class="k">async</span> (req, res) =&gt; {
  <span class="k">try</span> {
    <span class="k">const</span> user = <span class="k">await</span> <span class="t">User</span>.findById(req.user.id);
    <span class="k">if</span> (!user) {
      <span class="k">return</span> res.status(<span class="n">404</span>).json({
        success: <span class="k">false</span>,
        message: <span class="s">'User not found'</span>
      });
    }
    res.json({ success: <span class="k">true</span>, payload: user });
  } <span class="k">catch</span> (error) {
    res.status(<span class="n">500</span>).json({
      success: <span class="k">false</span>,
      message: <span class="s">'Internal server error'</span>
    });
  }
};

<span class="c">/**</span>
<span class="c"> * Refresh access token</span>
<span class="c"> */</span>
<span class="k">const</span> refresh = <span class="k">async</span> (req, res) =&gt; {
  <span class="k">try</span> {
    <span class="k">const</span> { refreshToken } = req.body;
    <span class="k">if</span> (!refreshToken) {
      <span class="k">return</span> res.status(<span class="n">400</span>).json({
        success: <span class="k">false</span>,
        message: <span class="s">'Refresh token required'</span>
      });
    }
    <span class="k">const</span> decoded = verifyRefreshToken(refreshToken);
    <span class="k">const</span> user = <span class="k">await</span> <span class="t">User</span>.findById(decoded.id);
    <span class="k">const</span> tokens = generateTokens(user);
    res.json({ success: <span class="k">true</span>, payload: tokens });
  } <span class="k">catch</span> (error) {
    res.status(<span class="n">401</span>).json({
      success: <span class="k">false</span>,
      message: <span class="s">'Invalid refresh token'</span>
    });
  }
};


<span class="c">/**</span>
<span class="c"> * Get current user profile</span>
<span class="c"> * @route GET /api/auth/profile</span>
<span class="c"> */</span>
<span class="k">const</span> getProfile = <span class="k">async</span> (req, res) =&gt; {
  <span class="k">try</span> {
    <span class="k">const</span> user = <span class="k">await</span> <span class="t">User</span>.findById(req.user.id);
    <span class="k">if</span> (!user) {
      <span class="k">return</span> res.status(<span class="n">404</span>).json({
        success: <span class="k">false</span>,
        message: <span class="s">'User not found'</span>
      });
    }
    res.json({ success: <span class="k">true</span>, payload: user });
  } <span class="k">catch</span> (error) {
    res.status(<span class="n">500</span>).json({
      success: <span class="k">false</span>,
      message: <span class="s">'Internal server error'</span>
    });
  }
};

<span class="c">/**</span>
<span class="c"> * Refresh access token</span>
<span class="c"> */</span>
<span class="k">const</span> refresh = <span class="k">async</span> (req, res) =&gt; {
  <span class="k">try</span> {
    <span class="k">const</span> { refreshToken } = req.body;
    <span class="k">if</span> (!refreshToken) {
      <span class="k">return</span> res.status(<span class="n">400</span>).json({
        success: <span class="k">false</span>,
        message: <span class="s">'Refresh token required'</span>
      });
    }
    <span class="k">const</span> decoded = verifyRefreshToken(refreshToken);
    <span class="k">const</span> user = <span class="k">await</span> <span class="t">User</span>.findById(decoded.id);
    <span class="k">const</span> tokens = generateTokens(user);
    res.json({ success: <span class="k">true</span>, payload: tokens });
  } <span class="k">catch</span> (error) {
    res.status(<span class="n">401</span>).json({
      success: <span class="k">false</span>,
      message: <span class="s">'Invalid refresh token'</span>
    });
  }
};


<span class="c">/**</span>
<span class="c"> * Get current user profile</span>
<span class="c"> * @route GET /api/auth/profile</span></div>
  <div class="a" style="left:1252px;top:161.5px;width:11px;height:99px;background:#c4c4c4"></div>
  <div class="a" style="left:1252px;top:161.5px;width:11px;height:2px;background:#555"></div>
  <!-- END MINIMAP -->
  <!-- ANNOT -->
  <svg style="left:1095px;top:612px" width="150" height="68" viewBox="0 0 1800 816"><g fill="none" stroke="#35a047" stroke-width="60" stroke-linecap="round" stroke-linejoin="round">
    <path d="M85 522 L262 140 L350 522"/>
    <path d="M92 388 L282 376"/>
    <path d="M680 272 Q600 262 560 268 Q470 290 465 405 Q470 530 565 532 Q640 530 675 470"/>
    <path d="M680 272 L672 585 Q660 685 540 690 Q490 688 465 668"/>
    <path d="M842 405 L1030 322 Q1010 258 935 258 Q830 265 815 395 Q820 530 915 535 Q980 535 1035 475"/>
    <path d="M1180 252 L1176 532"/>
    <path d="M1180 370 Q1230 270 1310 268 Q1370 275 1375 360 L1385 532"/>
    <path d="M1570 155 L1560 430 Q1565 530 1650 532 Q1700 530 1728 512"/>
    <path d="M1492 275 L1738 282"/>
  </g></svg>
  <svg style="left:1105px;top:680px" width="130" height="52" viewBox="0 0 1800 720"><g fill="none" stroke="#35a047" stroke-width="72" stroke-linecap="round" stroke-linejoin="round">
    <path d="M160 592 L218 165 L305 545 L410 165 L470 592"/>
    <ellipse cx="717" cy="445" rx="125" ry="158"/>
    <path d="M1262 332 Q1200 295 1130 298 Q1005 320 1000 440 Q1005 590 1125 595 Q1210 592 1262 525"/>
    <path d="M1265 112 L1262 590"/>
    <path d="M1455 452 L1655 370 Q1630 290 1550 288 Q1440 300 1420 450 Q1430 590 1545 595 Q1610 592 1668 530"/>
  </g></svg>
  <!-- green annotation box -->
  <div class="a" style="left:1263px;top:120px;width:467px;height:883px;border:3px solid #2a9c40"></div>
  <!-- END ANNOT -->
  <!-- STATUSBAR -->
  <div class="a" style="left:75px;top:979px;width:74.5px;height:26px;background:#e4ecfb"></div>
  <svg style="left:88px;top:985px" width="13" height="14" viewBox="0 0 13 14"><circle cx="2.6" cy="2.4" r="1.6" fill="#777"/><circle cx="2.6" cy="11.6" r="1.6" fill="#777"/><circle cx="10.6" cy="2.4" r="1.6" fill="#777"/><path d="M2.6 2.4 V11.6 M10.6 2.4 Q10.6 7.4 2.8 8" fill="none" stroke="#777" stroke-width="1.5"/></svg>
  <div class="a sbt" style="left:106px;font-size:13.6px">main</div>
  <svg style="left:159px;top:986px" width="12" height="13" viewBox="0 0 12 13"><path d="M6 12.4 V1.2 M1 6 L6 1 L11 6" fill="none" stroke="#7a7a7a" stroke-width="1.3" stroke-linecap="round" stroke-linejoin="round"/></svg>
  <svg style="left:181.5px;top:986px" width="12" height="13" viewBox="0 0 12 13"><path d="M6 0.6 V11.8 M1 7 L6 12 L11 7" fill="none" stroke="#7a7a7a" stroke-width="1.3" stroke-linecap="round" stroke-linejoin="round"/></svg>
  <div class="a" style="left:203.3px;top:979px;width:82.7px;height:26px;background:#fdede9"></div>
  <svg style="left:209px;top:985px" width="15" height="15" viewBox="0 0 15 15"><path d="M7.5 0.9 L14.1 7.5 L7.5 14.1 L0.9 7.5 Z" fill="none" stroke="#d9473a" stroke-width="1.3" stroke-linejoin="round"/><path d="M7.5 4 V8.2" stroke="#d9473a" stroke-width="1.4" stroke-linecap="round"/><circle cx="7.5" cy="10.6" r="0.9" fill="#d9473a"/></svg>
  <div class="a sbt" style="left:231px;color:#888">1</div>
  <svg style="left:247px;top:985px" width="15" height="14" viewBox="0 0 15 14"><path d="M7.5 1 L14 13 H1 Z" fill="none" stroke="#777" stroke-width="1.3" stroke-linejoin="round"/><path d="M7.5 5 V8.6" stroke="#777" stroke-width="1.3" stroke-linecap="round"/><circle cx="7.5" cy="10.8" r="0.8" fill="#777"/></svg>
  <div class="a sbt" style="left:268px;color:#888">0</div>
  <svg style="left:292.5px;top:986px" width="14" height="13" viewBox="0 0 14 13"><rect x="0.7" y="0.7" width="12.6" height="11.6" rx="1.5" fill="none" stroke="#777" stroke-width="1.1"/><path d="M0.7 3.6 H13.3 M3 6 L5 7.6 L3 9.2 M6.6 9.4 H10" fill="none" stroke="#777" stroke-width="1.1"/></svg>
  <div class="a sbt" style="left:310.5px">Console</div>
  <svg style="left:371.5px;top:986px" width="14" height="13" viewBox="0 0 14 13"><rect x="0.7" y="0.7" width="12.6" height="11.6" rx="1.5" fill="none" stroke="#777" stroke-width="1.1"/><path d="M3.2 4 L5.6 6.2 L3.2 8.4 M6.8 9 H10.4" fill="none" stroke="#777" stroke-width="1.1"/></svg>
  <div class="a sbt" style="left:390px">Terminal</div>
  <svg style="left:1314.5px;top:987.5px" width="12" height="11" viewBox="0 0 12 11"><path d="M6.6 0.7 H10.4 Q11.3 0.7 11.3 1.6 V5.4 L5.8 10.6 L0.6 5.4 Z" fill="none" stroke="#777" stroke-width="1.2" stroke-linejoin="round"/><circle cx="8.6" cy="3.4" r="0.9" fill="#777"/></svg>
  <div class="a sbt" style="left:1331.5px">default</div>
  <svg style="left:1385px;top:987px" width="14" height="11" viewBox="0 0 14 11"><rect x="0.6" y="0.6" width="12.8" height="9.8" rx="1.4" fill="none" stroke="#777" stroke-width="1.1"/><path d="M6 0.6 V10.4 M2.2 3 H4.2 M2.2 5 H4.2 M2.2 7 H4.2" fill="none" stroke="#777" stroke-width="1"/></svg>
  <div class="a sbt" style="left:1404px;font-size:12.7px">V12 Sidebar</div>
  <div class="a sbt" style="left:1487px">Globals</div>
  <div class="a sbt" style="left:1543.3px">Vault</div>
  <div class="a sbt" style="left:1586.5px">Tools</div>
  <svg style="left:1629.5px;top:987px" width="15" height="11" viewBox="0 0 15 11"><path d="M0.5 3 H14.5 M0.5 8 H14.5" stroke="#777" stroke-width="1.1"/><circle cx="9.5" cy="3" r="1.8" fill="#fff" stroke="#777" stroke-width="1.1"/><circle cx="5" cy="8" r="1.8" fill="#fff" stroke="#777" stroke-width="1.1"/></svg>
  <svg style="left:1657px;top:986.5px" width="14" height="12" viewBox="0 0 14 12"><rect x="0.6" y="0.6" width="12.8" height="10.8" rx="1.6" fill="none" stroke="#888" stroke-width="1.1"/><rect x="2.2" y="2.4" width="2.6" height="7.2" fill="#666"/></svg>
  <svg style="left:1683px;top:986.5px" width="15" height="12" viewBox="0 0 15 12"><rect x="0.6" y="0.6" width="13.8" height="10.8" rx="1.6" fill="none" stroke="#888" stroke-width="1.1"/><rect x="2.4" y="7.6" width="10.2" height="2" fill="#666"/></svg>
  <svg style="left:1710.5px;top:986.5px" width="14" height="12" viewBox="0 0 14 12"><rect x="0.6" y="0.6" width="12.8" height="10.8" rx="1.6" fill="none" stroke="#888" stroke-width="1.1"/><rect x="9.2" y="2.4" width="2.6" height="7.2" fill="#666"/></svg>
  <!-- END STATUSBAR -->
</div>
</body></html>
